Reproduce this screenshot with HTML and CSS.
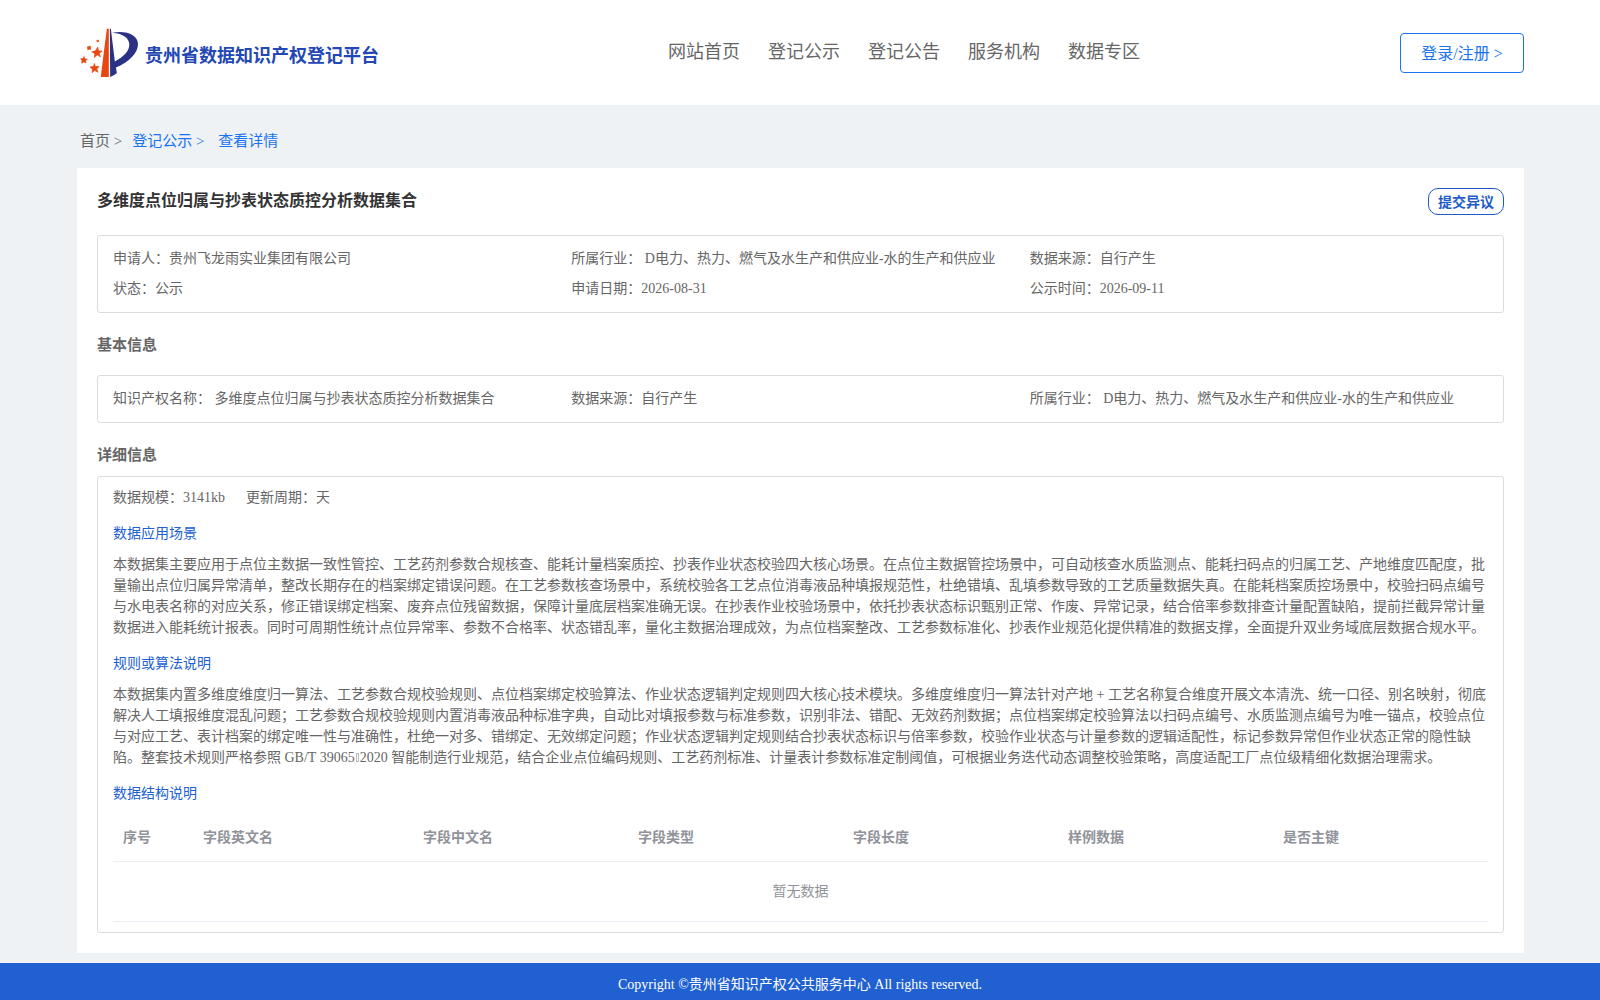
FILE: index.html
```
<!DOCTYPE html>
<html lang="zh-CN">
    <head>
        <meta charset="utf-8">
        <meta name="viewport" content="width=device-width, initial-scale=1.0">
        <title>贵州省数据知识产权登记平台</title>
        <link rel="stylesheet" href="styles.css">
    </head>
    <body>

        <header class="header">
            <div class="container header-inner">
                <a href="#" class="brand">
                    <svg class="logo" viewBox="60 52 176 152" aria-hidden="true">
                        <path fill="#e8480f" d="M140 57h6v144h-24z"/>
                        <path fill="#2b3284" d="M149 57h3l12 98c27-14 44-32 43-52-1-20-21-32-51-34 40-8 77 5 77 34 0 28-28 55-66 70l3 16q-8 8-20 12z"/>
                        <g fill="#e8480f" stroke="#e8480f" stroke-width="2" stroke-linejoin="round">
                            <path d="M113 112l2 11 11 1-9 6 4 11-10-6-8 8 1-12-9-5 11-3z"/>
                            <path d="M103 161l3 9 11 0-7 7 4 10-10-5-8 6 1-10-7-7 10-1z"/>
                            <path d="M72 140l2 7 8 1-6 5 2 6-7-3-6 4 1-8-4-5 7-1z"/>
                            <path d="M87 109l5 1-1 4 1 5-4-1-5 2 0-5-1-4 4 0zM110 92l5-1 1 4-5 1z"/>
                        </g>
                    </svg>
                    <span class="brand-name">贵州省数据知识产权登记平台</span>
                </a>
                <nav class="nav">
                    <a href="#">网站首页</a>
                    <a href="#">登记公示</a>
                    <a href="#">登记公告</a>
                    <a href="#">服务机构</a>
                    <a href="#">数据专区</a>
                </nav>
                <button type="button" class="btn-login">登录/注册 &gt;</button>
            </div>
        </header>

        <main class="container">
            <div class="breadcrumb">
                <a href="#">首页 &gt;</a>
                <a href="#" class="active">登记公示 &gt;</a>
                <a href="#" class="active">&nbsp;查看详情</a>
            </div>

            <div class="card">
                <div class="card-head">
                    <h1>多维度点位归属与抄表状态质控分析数据集合</h1>
                    <button type="button" class="btn-objection">提交异议</button>
                </div>

                <div class="box info">
                    <div>申请人：贵州飞龙雨实业集团有限公司</div>
                    <div>所属行业： D电力、热力、燃气及水生产和供应业-水的生产和供应业</div>
                    <div>数据来源：自行产生</div>
                    <div>状态：公示</div>
                    <div>申请日期：2026-08-31</div>
                    <div>公示时间：2026-09-11</div>
                </div>

                <h2>基本信息</h2>
                <div class="box info basic">
                    <div>知识产权名称： 多维度点位归属与抄表状态质控分析数据集合</div>
                    <div>数据来源：自行产生</div>
                    <div>所属行业： D电力、热力、燃气及水生产和供应业-水的生产和供应业</div>
                </div>

                <h2>详细信息</h2>
                <div class="box detail">
                    <div class="scale">
                        <span>数据规模：3141kb</span>
                        <span>更新周期：天</span>
                    </div>

                    <h3>数据应用场景</h3>
                    <p>本数据集主要应用于点位主数据一致性管控、工艺药剂参数合规核查、能耗计量档案质控、抄表作业状态校验四大核心场景。在点位主数据管控场景中，可自动核查水质监测点、能耗扫码点的归属工艺、产地维度匹配度，批量输出点位归属异常清单，整改长期存在的档案绑定错误问题。在工艺参数核查场景中，系统校验各工艺点位消毒液品种填报规范性，杜绝错填、乱填参数导致的工艺质量数据失真。在能耗档案质控场景中，校验扫码点编号与水电表名称的对应关系，修正错误绑定档案、废弃点位残留数据，保障计量底层档案准确无误。在抄表作业校验场景中，依托抄表状态标识甄别正常、作废、异常记录，结合倍率参数排查计量配置缺陷，提前拦截异常计量数据进入能耗统计报表。同时可周期性统计点位异常率、参数不合格率、状态错乱率，量化主数据治理成效，为点位档案整改、工艺参数标准化、抄表作业规范化提供精准的数据支撑，全面提升双业务域底层数据合规水平。</p>

                    <h3>规则或算法说明</h3>
                    <p>本数据集内置多维度维度归一算法、工艺参数合规校验规则、点位档案绑定校验算法、作业状态逻辑判定规则四大核心技术模块。多维度维度归一算法针对产地 + 工艺名称复合维度开展文本清洗、统一口径、别名映射，彻底解决人工填报维度混乱问题；工艺参数合规校验规则内置消毒液品种标准字典，自动比对填报参数与标准参数，识别非法、错配、无效药剂数据；点位档案绑定校验算法以扫码点编号、水质监测点编号为唯一锚点，校验点位与对应工艺、表计档案的绑定唯一性与准确性，杜绝一对多、错绑定、无效绑定问题；作业状态逻辑判定规则结合抄表状态标识与倍率参数，校验作业状态与计量参数的逻辑适配性，标记参数异常但作业状态正常的隐性缺陷。整套技术规则严格参照 GB/T 39065<span class="glyph-box"></span>2020 智能制造行业规范，结合企业点位编码规则、工艺药剂标准、计量表计参数标准定制阈值，可根据业务迭代动态调整校验策略，高度适配工厂点位级精细化数据治理需求。</p>

                    <h3>数据结构说明</h3>
                    <table>
                        <colgroup>
                            <col class="col-index">
                            <col class="col-name">
                            <col span="5">
                        </colgroup>
                        <thead>
                            <tr>
                                <th>序号</th>
                                <th>字段英文名</th>
                                <th>字段中文名</th>
                                <th>字段类型</th>
                                <th>字段长度</th>
                                <th>样例数据</th>
                                <th>是否主键</th>
                            </tr>
                        </thead>
                        <tbody>
                            <tr>
                                <td colspan="7" class="empty">暂无数据</td>
                            </tr>
                        </tbody>
                    </table>
                </div>
            </div>
        </main>

        <footer class="footer">Copyright ©贵州省知识产权公共服务中心 All rights reserved.</footer>

    </body>
</html>
```
FILE: styles.css
```
* {
    box-sizing: border-box;
}

body {
    margin: 0;
    background: #eef2f5;
    color: #666;
    font-family: "Liberation Serif", "Noto Sans CJK SC", serif;
    font-size: 14px;
    line-height: 20px;
}

a {
    color: inherit;
    text-decoration: none;
}

button {
    background: #fff;
    font-family: inherit;
    cursor: pointer;
}

.container {
    margin: 0 76px 0 77px;
}

/* header */
.header {
    background: #fff;
}

.header-inner {
    display: grid;
    grid-template-columns: 591px 1fr auto;
    align-items: center;
    height: 105px;
}

.brand {
    display: flex;
    align-items: center;
    gap: 6px;
    padding-left: 3px;
    color: #2347b5;
    font-size: 18px;
    font-weight: bold;
}

.logo {
    width: 59px;
    height: 51px;
}

.brand-name {
    padding-top: 6px;
}

.nav {
    display: flex;
    gap: 28px;
    padding-bottom: 2px;
    font-size: 18px;
}

.btn-login {
    width: 124px;
    height: 40px;
    padding: 0 0 2px;
    border: 1px solid #1a73f0;
    border-radius: 4px;
    color: #1a73f0;
    font-size: 16px;
}

.breadcrumb {
    display: flex;
    gap: 10px;
    padding: 26px 3px 17px;
    font-size: 15px;
}

.breadcrumb .active {
    color: #1a73f0;
}

/* content */
.card {
    padding: 20px;
    background: #fff;
}

.card-head {
    display: flex;
    justify-content: space-between;
    align-items: flex-start;
    margin-bottom: 20px;
}

h1 {
    margin: 3px 0 0;
    color: #333;
    font-size: 16px;
}

.btn-objection {
    width: 76px;
    height: 27px;
    padding: 0 0 2px;
    border: 1px solid #1f5bc8;
    border-radius: 10px;
    color: #1f5bc8;
    font-size: 14px;
    font-weight: bold;
}

h2 {
    margin: 22px 0 11px;
    font-size: 15px;
    line-height: 20px;
}

.box {
    border: 1px solid #dcdcdc;
    border-radius: 3px;
}

.info {
    display: grid;
    grid-template-columns: repeat(3, 1fr);
    padding: 8px 15px;
    line-height: 30px;
}

.basic {
    margin-top: 20px;
}

.detail {
    padding: 11px 15px 10px;
}

.scale {
    display: flex;
    gap: 21px;
}

h3 {
    margin: 16px 0 10px;
    color: #2060d0;
    font-size: 14px;
    font-weight: normal;
    line-height: 20px;
}

p {
    margin: 0;
    line-height: 21px;
}

/* unprintable character in the standard number */
.glyph-box {
    display: inline-block;
    width: 3px;
    height: 9px;
    margin: 0 1px;
    border: 1px solid #bbb;
}

table {
    width: 100%;
    border-collapse: collapse;
    table-layout: fixed;
    color: #909399;
}

.col-index {
    width: 80px;
}

.col-name {
    width: 220px;
}

th {
    height: 47px;
    padding: 2px 10px 0;
    border-bottom: 1px solid #ebeef5;
    text-align: left;
}

.empty {
    height: 60px;
    padding: 1px 0 0;
    border-bottom: 1px solid #ebeef5;
    text-align: center;
}

.footer {
    margin-top: 10px;
    padding: 12px 0 5px;
    background: #2060d0;
    color: #fff;
    text-align: center;
}
```
